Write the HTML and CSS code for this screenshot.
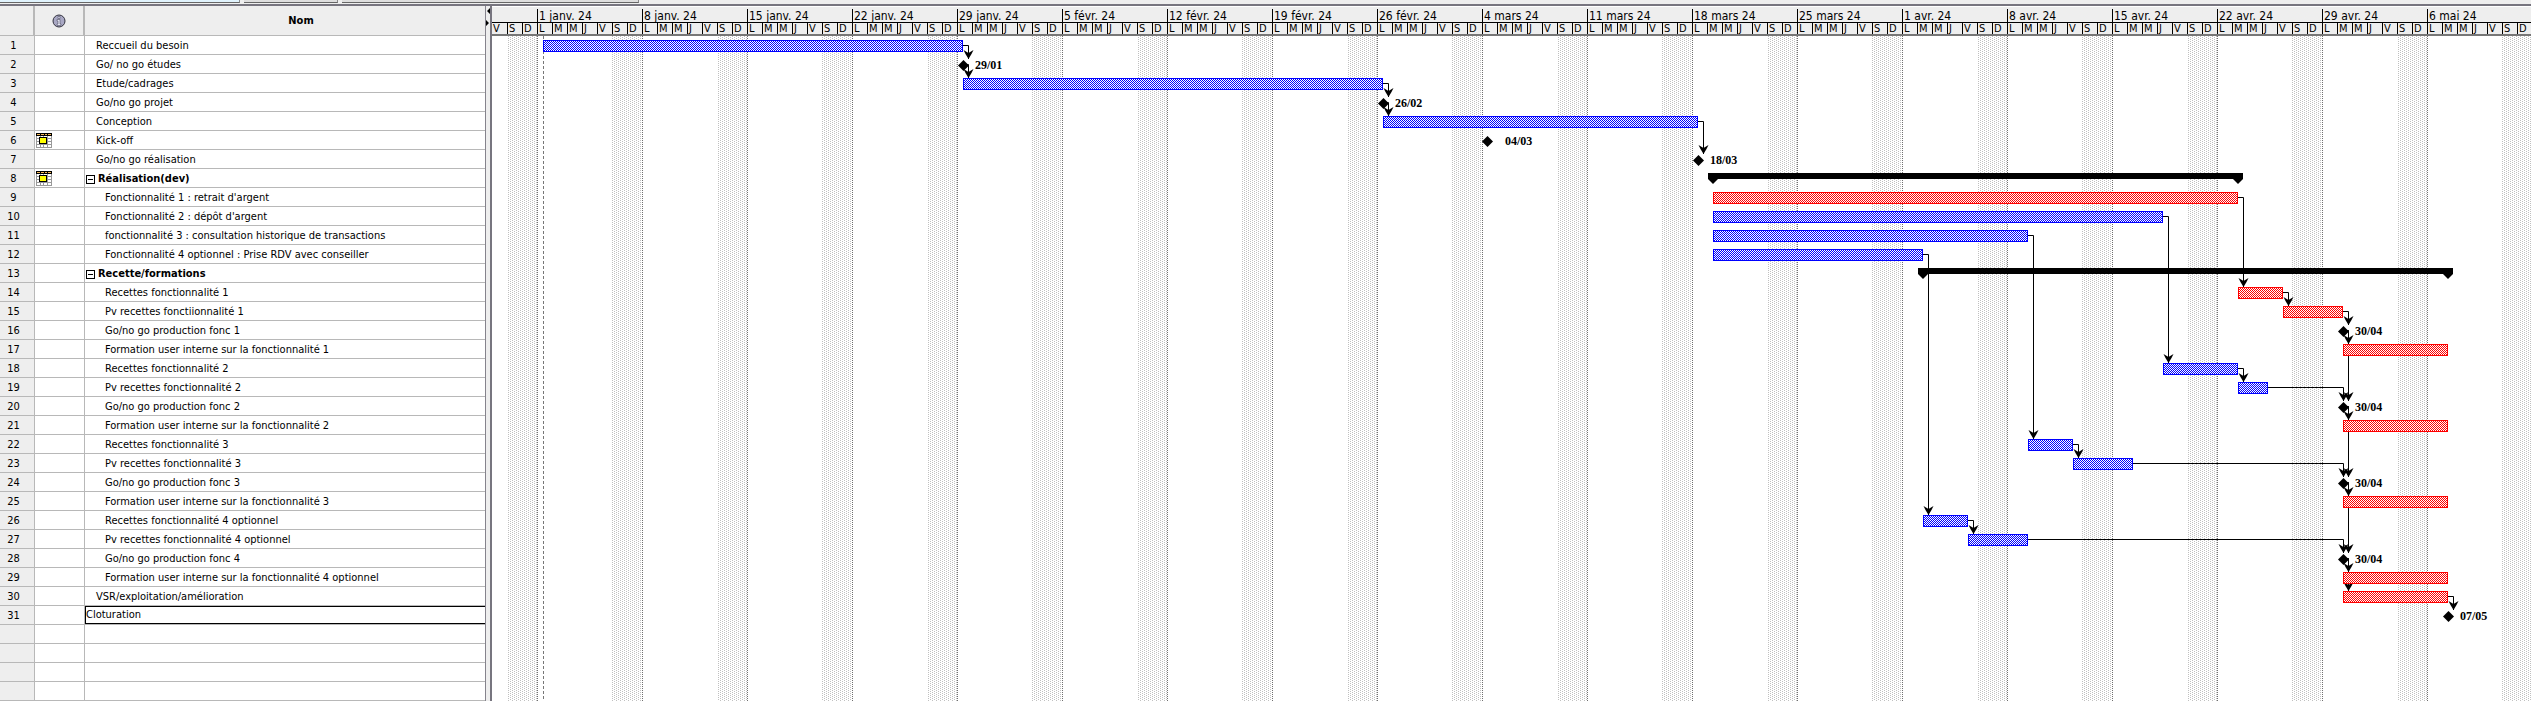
FILE: index.html
```html
<!DOCTYPE html>
<html lang="fr">
<head>
<meta charset="utf-8">
<title>Diagramme de Gantt</title>
<link rel="stylesheet" href="styles.css">
</head>
<body>
<div class="toolbar" aria-hidden="true"><span class="tab tab-active"></span><span class="tab tab-small"></span><span class="tab tab-wide"></span></div>
<main class="workspace">
  <section class="sheet">
    <table class="tasks">
      <colgroup><col class="col-id"><col class="col-info"><col></colgroup>
      <thead>
        <tr>
          <th></th>
          <th class="info"><svg width="14" height="14" viewBox="0 0 14 14" role="img" aria-label="Indicateurs"><circle cx="7" cy="7" r="6" fill="#a9a8c4" stroke="#33333f"/><path d="M5 11.5V10h1V7H5V5.500h3V10h1v1.500zM6 2.500h2v2H6z" fill="#e4e4f2" stroke="#55556a" stroke-width=".6"/></svg></th>
          <th class="name">Nom</th>
        </tr>
      </thead>
      <tbody id="tasks"></tbody>
    </table>
  </section>
  <div class="splitter">
    <svg width="4" height="20" viewBox="0 0 4 20" aria-hidden="true"><path d="M4 0v6L1 3zM0 12v6l3-3z"/></svg>
  </div>
  <section class="chart">
    <div class="timescale" id="timescale"></div>
    <div class="plot">
      <svg class="grid" id="grid" aria-hidden="true">
        <defs>
          <pattern id="rest" width="4" height="2" patternUnits="userSpaceOnUse"><path d="M0 0h1v1H0zM2 1h1v1H2z" fill="#c0c0c0"/></pattern>
        </defs>
      </svg>
      <div class="rows" id="rows"></div>
    </div>
  </section>
</main>
<script src="script.js"></script>
</body>
</html>
```
FILE: styles.css
```css
* { box-sizing: border-box; }
html, body { height: 100%; }
body {
  margin: 0;
  display: flex;
  flex-direction: column;
  overflow: hidden;
  background: #fff;
  color: #000;
  font: 11px/16px "DejaVu Sans Condensed", "DejaVu Sans", sans-serif;
}
.toolbar {
  display: flex;
  flex: none;
  gap: 4px;
  height: 6px;
  padding-bottom: 1px;
  background: #eee;
  border-bottom: 2px solid #77757f;
}
.tab { height: 3px; background: #dedede; border-bottom: 1px solid #666; border-right: 1px solid #888; }
.tab-active { width: 240px; background: #e0f2fc; }
.tab-small { width: 94px; }
.tab-wide { width: 297px; }
.workspace { display: flex; flex: 1; min-height: 0; }
.sheet { flex: none; width: 486px; border-right: 1px solid #85838c; overflow: hidden; }
.tasks { width: 100%; border-collapse: separate; border-spacing: 0; table-layout: fixed; }
.col-id { width: 35px; }
.col-info { width: 50px; }
.tasks th, .tasks td { padding: 0; border-right: 1px solid #b8b8b8; border-bottom: 1px solid #b8b8b8; }
.tasks th:last-child, .tasks td:last-child { border-right: 0; }
.tasks thead th { height: 30px; background: #eee; font-weight: bold; border-right-width: 2px; }
.tasks .info svg { display: block; margin: 0 auto; }
.tasks .name { padding-left: 32px; }
.tasks td { height: 19px; white-space: nowrap; }
.tasks .id { background: #eee; text-align: center; padding: 2px 7px 0 0; }
.tasks .cal { padding-left: 1px; }
.cal svg { display: block; }
.level-0 { border: 1px solid #000; border-right: 0; }
.level-1 { padding: 2px 0 0 11px; }
.level-2 { padding: 2px 0 0 20px; }
.summary { display: flex; align-items: center; gap: 3px; padding: 2px 0 0 1px; font-weight: bold; }
.toggle { width: 9px; height: 9px; padding: 0; display: grid; place-items: center; border: 1px solid #000; background: #fff; }
.toggle::before { content: ""; width: 5px; height: 1px; background: #000; }
.splitter { flex: none; width: 6px; padding-top: 2px; background: #eee; border-right: 2px solid #77757f; }
.splitter svg { display: block; }
.chart { flex: 1; min-width: 0; display: flex; flex-direction: column; overflow: hidden; }
.timescale {
  display: flex;
  flex: none;
  height: 30px;
  padding-top: 2px;
  background: #eee;
  border-bottom: 2px solid #777;
  border-top: 1px solid #fff;
  overflow: hidden;
}
.week { flex: none; }
.week-name { height: 14px; padding-left: 1px; line-height: 14px; font-size: 12px; border-left: 1px solid #000; border-bottom: 1px solid #000; }
.week:first-child .week-name { border-left: 0; }
.days { display: flex; }
.day { width: 15px; height: 11px; padding-left: 1px; line-height: 11px; border-left: 1px solid #000; }
.week:first-child .day:first-child { border-left: 0; }
.plot { position: relative; flex: 1; overflow: hidden; }
.grid { position: absolute; inset: 0; width: 100%; height: 100%; }
.rows { position: relative; }
.row { display: flex; align-items: flex-start; height: 19px; padding-top: 4px; }
.bar {
  height: 12px;
  border: 1px solid #00f;
  background: repeating-conic-gradient(#00f 0 25%, #fff 0 50%) 0 0 / 2px 2px;
}
.bar-critical { border-color: #f00; background-image: repeating-conic-gradient(#f00 0 25%, #fff 0 50%); }
.phase { height: 6px; background: #000; display: flex; justify-content: space-between; }
.phase::before, .phase::after { content: ""; width: 10px; height: 11px; background: #000; clip-path: polygon(0 0, 100% 0, 100% 6px, 50% 11px, 0 6px); }
.milestone { display: flex; align-items: center; gap: 6px; height: 12px; font: bold 12px/12px "Liberation Serif", serif; }
.milestone svg { display: block; }
.milestone-wide { gap: 12px; }
```
FILE: script.js
```javascript
const DAY = 15, ROW = 19, ORIGIN = 45;
// Each task: [name, level, kind, start, end or label]; offsets are pixels from 1 January on a 15px day.
const tasks = [
  ["Reccueil du besoin", 1, "bar", 6, 426],
  ["Go/ no go études", 1, "mile", 426, "29/01"],
  ["Etude/cadrages", 1, "bar", 426, 846],
  ["Go/no go projet", 1, "mile", 846, "26/02"],
  ["Conception", 1, "bar", 846, 1161],
  ["Kick-off", 1, "mile-wide", 950, "04/03", true],
  ["Go/no go réalisation", 1, "mile", 1161, "18/03"],
  ["Réalisation(dev)", "s", "phase", 1171, 1706, true],
  ["Fonctionnalité 1 : retrait d'argent", 2, "crit", 1176, 1701],
  ["Fonctionnalité 2 : dépôt d'argent", 2, "bar", 1176, 1626],
  ["fonctionnalité 3 : consultation historique de transactions", 2, "bar", 1176, 1491],
  ["Fonctionnalité 4 optionnel : Prise RDV avec conseiller", 2, "bar", 1176, 1386],
  ["Recette/formations", "s", "phase", 1381, 1916],
  ["Recettes fonctionnalité 1", 2, "crit", 1701, 1746],
  ["Pv recettes fonctiionnalité 1", 2, "crit", 1746, 1806],
  ["Go/no go production fonc 1", 2, "mile", 1806, "30/04"],
  ["Formation user interne sur la fonctionnalité 1", 2, "crit", 1806, 1911],
  ["Recettes fonctionnalité 2", 2, "bar", 1626, 1701],
  ["Pv recettes fonctionnalité 2", 2, "bar", 1701, 1731],
  ["Go/no go production fonc 2", 2, "mile", 1806, "30/04"],
  ["Formation user interne sur la fonctionnalité 2", 2, "crit", 1806, 1911],
  ["Recettes fonctionnalité 3", 2, "bar", 1491, 1536],
  ["Pv recettes fonctionnalité 3", 2, "bar", 1536, 1596],
  ["Go/no go production fonc 3", 2, "mile", 1806, "30/04"],
  ["Formation user interne sur la fonctionnalité 3", 2, "crit", 1806, 1911],
  ["Recettes fonctionnalité 4 optionnel", 2, "bar", 1386, 1431],
  ["Pv recettes fonctionnalité 4 optionnel", 2, "bar", 1431, 1491],
  ["Go/no go production fonc 4", 2, "mile", 1806, "30/04"],
  ["Formation user interne sur la fonctionnalité 4 optionnel", 2, "crit", 1806, 1911],
  ["VSR/exploitation/amélioration", 1, "crit", 1806, 1911],
  ["Cloturation", 0, "mile", 1911, "07/05"]
];
// Dependencies: [from row, to row, x of the vertical run]
const links = [
  [1, 2, 431], [2, 3, 431], [3, 4, 851], [4, 5, 851], [5, 7, 1166],
  [9, 14, 1706], [10, 18, 1631], [11, 22, 1496], [12, 26, 1391],
  [14, 15, 1751], [15, 16, 1811], [16, 17, 1811], [16, 20, 1811],
  [18, 19, 1706], [19, 20, 1806], [20, 21, 1811], [20, 24, 1811],
  [22, 23, 1541], [23, 24, 1806], [24, 25, 1811], [24, 28, 1811],
  [26, 27, 1436], [27, 28, 1806], [28, 29, 1811], [28, 30, 1811], [30, 31, 1916]
];
const weeks = ["", "1 janv. 24", "8 janv. 24", "15 janv. 24", "22 janv. 24", "29 janv. 24",
  "5 févr. 24", "12 févr. 24", "19 févr. 24", "26 févr. 24", "4 mars 24", "11 mars 24",
  "18 mars 24", "25 mars 24", "1 avr. 24", "8 avr. 24", "15 avr. 24", "22 avr. 24",
  "29 avr. 24", "6 mai 24"];

const calendar = '<svg width="16" height="15" viewBox="0 0 16 15" role="img" aria-label="Contrainte de date" shape-rendering="crispEdges"><path d="M0 0h16v15H0z" fill="#999"/><path d="M1 3h3v2H1zM5 3h2v2H5zM8 3h3v2H8zM12 3h3v2h-3zM1 6h3v2H1zM12 6h3v2h-3zM1 9h3v2H1zM12 9h3v2h-3zM1 12h3v2H1zM5 12h2v2H5zM8 12h3v2H8zM12 12h3v2h-3z" fill="#fff"/><path d="M0 0h16v3H0z"/><path d="M1 1h3v1H1zM5 1h3v1H5zM9 1h2v1H9zM12 1h3v1h-3z" fill="#f5b95a"/><path d="M3 4h8v7H3z"/><path d="M4 5h6v5H4z" fill="#ff0"/></svg>';

let body = "";
for (let i = 0; i < 35; i++) {
  const t = tasks[i];
  let cell = "";
  if (t) {
    cell = t[1] === "s"
      ? `<div class="summary"><button class="toggle" type="button" aria-label="Réduire ${t[0]}"></button>${t[0]}</div>`
      : `<div class="level-${t[1]}">${t[0]}</div>`;
  }
  body += `<tr><td class="id">${t ? i + 1 : ""}</td><td class="cal">${t && t[5] ? calendar : ""}</td><td>${cell}</td></tr>`;
}
document.getElementById("tasks").innerHTML = body;

document.getElementById("timescale").innerHTML = weeks.map((name, i) => {
  const days = i ? "LMMJVSD" : "VSD";
  return `<div class="week"><div class="week-name">${name}</div><div class="days">${[...days].map(d => `<span class="day">${d}</span>`).join("")}</div></div>`;
}).join("");

document.getElementById("rows").innerHTML = tasks.map(([, , kind, start, end]) => {
  const x = ORIGIN + start;
  if (kind.startsWith("mile")) {
    return `<div class="row"><span class="milestone${kind === "mile-wide" ? " milestone-wide" : ""}" style="margin-left:${x - 5}px"><svg width="11" height="11" viewBox="0 0 11 11"><path d="M5.500 0L11 5.500L5.500 11L0 5.500z"/></svg>${end}</span></div>`;
  }
  const cls = kind === "phase" ? "phase" : kind === "crit" ? "bar bar-critical" : "bar";
  return `<div class="row"><span class="${cls}" style="margin-left:${x}px;width:${end - start}px"></span></div>`;
}).join("");

let svg = "";
for (let w = 0; w < weeks.length + 1; w++) {
  const monday = ORIGIN + w * 7 * DAY;
  const rest = Math.ceil((monday - 2 * DAY) / 2) * 2;
  svg += `<rect x="${rest}" y="0" width="${monday - rest}" height="100%" fill="url(#rest)"/>`;
  svg += `<line x1="${monday + .5}" x2="${monday + .5}" y1="0" y2="100%" stroke="#707070" stroke-dasharray="1 1"/>`;
}
svg += `<line x1="${ORIGIN + 6.5}" x2="${ORIGIN + 6.5}" y1="0" y2="100%" stroke="#777" stroke-dasharray="3 2"/>`;
for (const [from, to, run] of links) {
  const t = tasks[from - 1];
  const x0 = ORIGIN + (typeof t[4] === "number" ? t[4] : t[3]);
  const x = ORIGIN + run + .5, y = (from - 1) * ROW + 9.5, tip = (to - 1) * ROW + 4;
  svg += `<path d="M${x0} ${y}H${x}V${tip}" fill="none" stroke="#000"/>`;
  svg += `<path d="M${x} ${tip}l-3 -5l-2 -4l5 3l5 -3l-2 4z"/>`;
}
document.getElementById("grid").insertAdjacentHTML("beforeend", svg);
```
